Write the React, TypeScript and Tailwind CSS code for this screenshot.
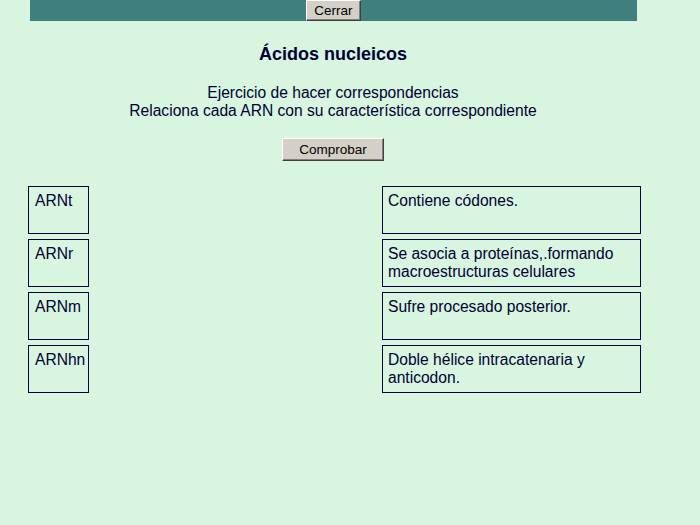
import React from 'react';

const pairs = [
  { left: 'ARNt', right: 'Contiene códones.' },
  { left: 'ARNr', right: 'Se asocia a proteínas,.formando macroestructuras celulares' },
  { left: 'ARNm', right: 'Sufre procesado posterior.' },
  { left: 'ARNhn', right: 'Doble hélice intracatenaria y anticodon.' },
];

const btn =
  'bg-[#d4d0c8] text-black text-[13.5px] leading-none border border-t-white border-l-white border-b-[#404040] border-r-[#404040] shadow-[inset_-1px_-1px_0_#808080]';

export default function App() {
  return (
    <div
      className="min-h-[525px] bg-[#d8f5e0] text-[#000033]"
      style={{ fontFamily: '"Liberation Sans", Arial, sans-serif' }}
    >
      <div className="ml-[30px] w-[607px] h-[21px] bg-[#417e7e] flex justify-center">
        <button className={`${btn} w-[55px] h-[21px]`}>Cerrar</button>
      </div>

      <div className="w-[610px] ml-[28px] flex flex-col items-center">
        <h1 className="mt-[24px] text-[18px] leading-[19px] font-bold">Ácidos nucleicos</h1>
        <div className="mt-[20px] text-[15.6px] leading-[18px] text-center">
          <p>Ejercicio de hacer correspondencias</p>
          <p>Relaciona cada ARN con su característica correspondiente</p>
        </div>
        <button className={`${btn} mt-[18px] w-[102px] h-[23px]`}>Comprobar</button>
      </div>

      <div className="mt-[25px] ml-[28px] w-[613px] flex flex-col gap-[5px]">
        {pairs.map((p) => (
          <div key={p.left} className="flex justify-between">
            <div className="w-[61px] h-[48px] border border-[#000040] px-[6px] pt-[5px] text-[15.6px] leading-[18px]">
              {p.left}
            </div>
            <div className="w-[259px] h-[48px] border border-[#000040] px-[5px] pt-[5px] text-[15.6px] leading-[18px]">
              {p.right}
            </div>
          </div>
        ))}
      </div>
    </div>
  );
}
